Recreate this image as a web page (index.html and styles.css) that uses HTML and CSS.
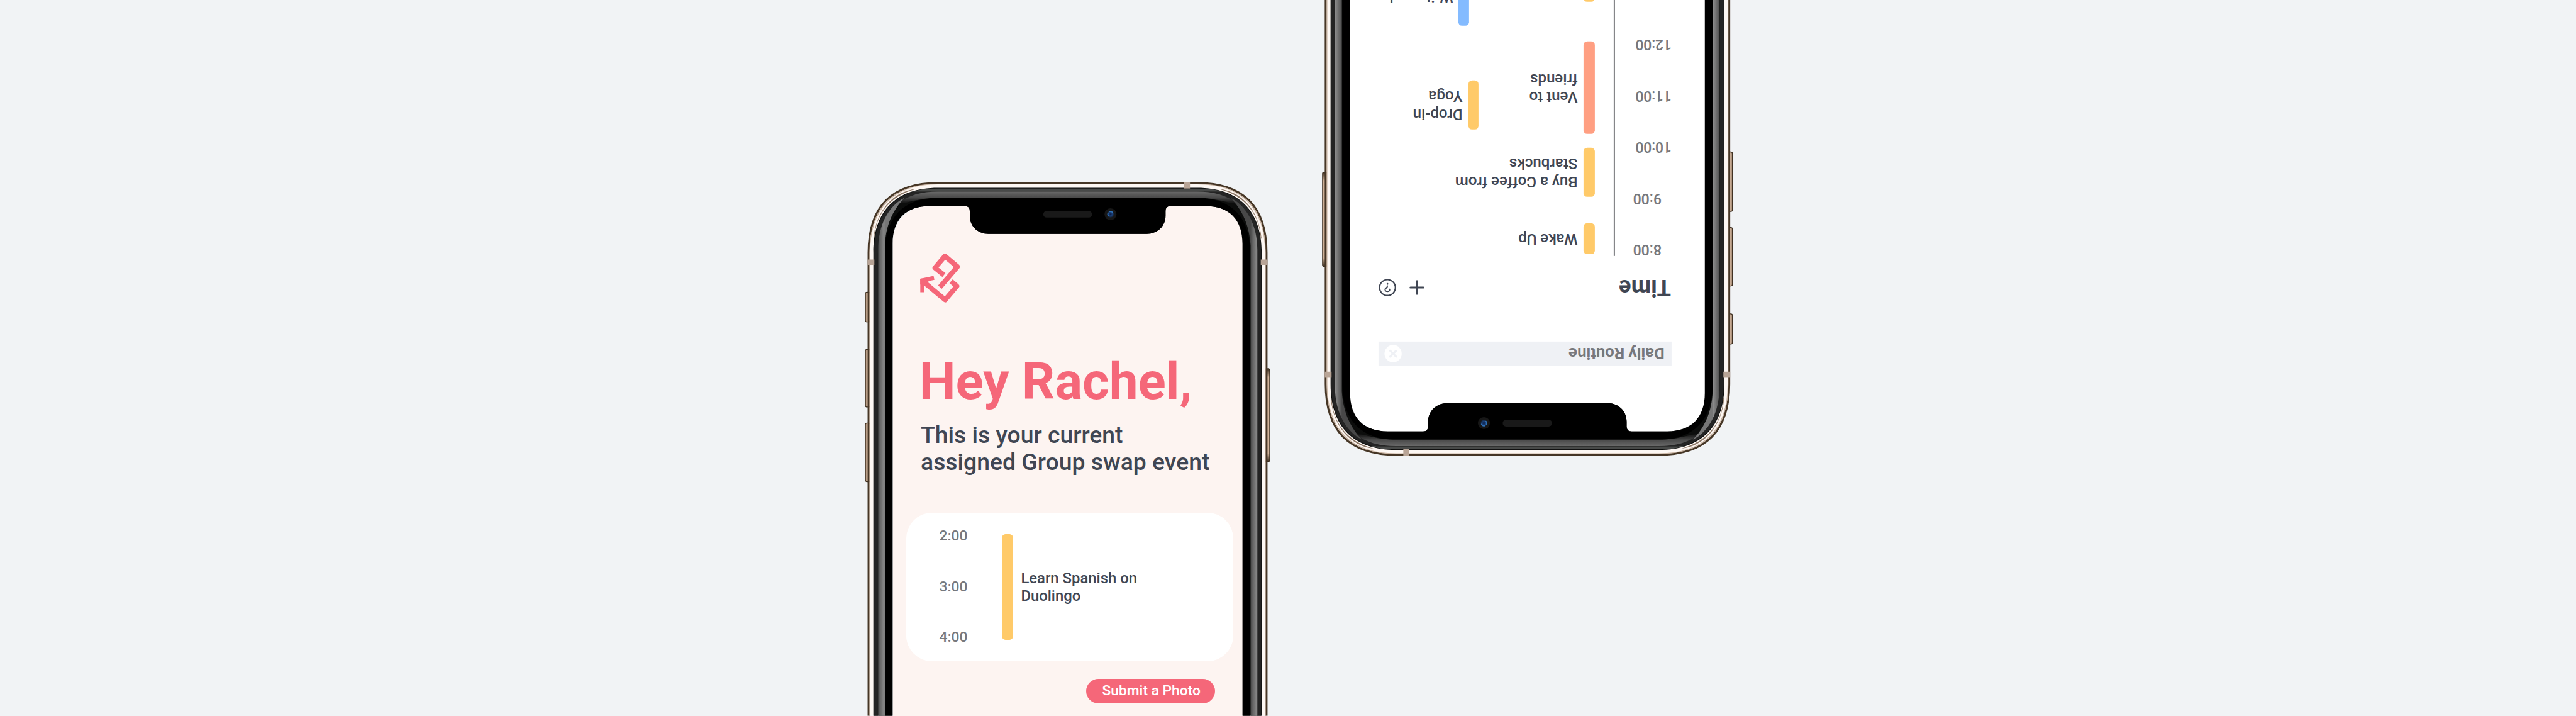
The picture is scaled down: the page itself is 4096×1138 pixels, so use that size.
FILE: index.html
```html
<!DOCTYPE html>
<html lang="en">
<head>
<meta charset="utf-8">
<title>Group swap</title>
<link rel="stylesheet" href="styles.css">
</head>
<body>
<svg class="defs" width="0" height="0" aria-hidden="true">
  <defs>
    <linearGradient id="sideShade" gradientUnits="userSpaceOnUse" x1="97" y1="0" x2="133" y2="0"><stop offset="0" stop-color="#484848"/><stop offset=".3" stop-color="#606060"/><stop offset=".9" stop-color="#8a8a8a"/><stop offset="1" stop-color="#777"/></linearGradient>
    <linearGradient id="sideShadeR" gradientUnits="userSpaceOnUse" x1="1972" y1="0" x2="2008" y2="0"><stop offset="0" stop-color="#484848"/><stop offset=".3" stop-color="#606060"/><stop offset=".9" stop-color="#8a8a8a"/><stop offset="1" stop-color="#777"/></linearGradient>
    <linearGradient id="topShade" gradientUnits="userSpaceOnUse" x1="0" y1="92" x2="0" y2="160"><stop offset="0" stop-color="#6a6a6a"/><stop offset=".48" stop-color="#484848"/><stop offset="1" stop-color="#000"/></linearGradient>
    <linearGradient id="keyL" x1="0" y1="0" x2="1" y2="0"><stop offset="0" stop-color="#8d7460"/><stop offset=".35" stop-color="#dcbfa7"/><stop offset="1" stop-color="#c9aa90"/></linearGradient>
    <linearGradient id="keyEnds" x1="0" y1="0" x2="0" y2="1"><stop offset="0" stop-color="#3a2c1e"/><stop offset=".09" stop-color="#3a2c1e" stop-opacity="0"/><stop offset=".91" stop-color="#3a2c1e" stop-opacity="0"/><stop offset="1" stop-color="#3a2c1e"/></linearGradient>
    <radialGradient id="lens"><stop offset="0" stop-color="#0b1c44"/><stop offset=".55" stop-color="#1a3f78"/><stop offset="1" stop-color="#14202f"/></radialGradient>
    <symbol id="frame" viewBox="0 0 2106 2730">
      <g fill="url(#keyL)" stroke="#3f3021" stroke-width="4">
        <rect x="35" y="599" width="24" height="150" rx="8"/>
        <rect x="35" y="887" width="24" height="290" rx="8"/>
        <rect x="35" y="1257" width="24" height="295" rx="8"/>
        <rect x="2046" y="984" width="23" height="468" rx="8"/>
      </g>
      <rect x="2050" y="984" width="19" height="468" rx="6" fill="url(#keyEnds)"/>
      <g fill="none">
        <path stroke="#463626" stroke-width="10" d="M51 2730V400C51 168 168 50 400 50H1704C1936 50 2053 168 2053 400V2730"/>
        <path stroke="#c9b3a1" stroke-width="6" d="M58 2730V400C58 174 174 57 400 57H1704C1930 57 2046 174 2046 400V2730"/>
        <path stroke="#fdf7f3" stroke-width="18" d="M68 2730V400C68 183 183 66 400 66H1704C1921 66 2036 183 2036 400V2730"/>
      </g>
      <path fill="#8d7867" d="M80 330C86 215 150 118 290 80C175 92 88 190 76 330Z"/>
      <path fill="#8d7867" d="M2024 330C2018 215 1954 118 1814 80C1929 92 2016 190 2028 330Z"/>
      <path fill="#0c0d0c" fill-rule="evenodd" d="M75 2730V400C75 190 190 74 400 74H1704C1914 74 2029 190 2029 400V2730H1936V356C1936 235 1866 166 1746 166H1570Q1545 166 1545 191V215C1545 268 1503 306 1450 306H654C601 306 560 268 560 215V191Q560 166 535 166H358C238 166 168 235 168 356V2730Z"/>
      <path fill="none" stroke="#242424" stroke-width="20" d="M88 2730V400C88 198 198 87 400 87H1704C1906 87 2016 198 2016 400V2730"/>
      <path fill="#484a49" d="M330 80H1774L1834 93H270Z"/>
      <path fill="none" stroke="#1c1c1c" stroke-width="2" d="M300 91H1804"/>
      <path fill="#000" fill-rule="evenodd" d="M133 2730V400C133 225 225 125 400 125H1704C1879 125 1971 225 1971 400V2730H1932V356C1932 235 1866 166 1746 166H1570Q1545 166 1545 191V215C1545 268 1503 306 1450 306H654C601 306 560 268 560 215V191Q560 166 535 166H358C238 166 172 235 172 356V2730Z"/>
      <path fill="url(#topShade)" d="M190 158C250 110 320 93 400 93H1704C1784 93 1854 110 1914 158C1850 150 1800 125 1704 125H400C304 125 254 150 190 158Z"/>
      <path fill="url(#sideShade)" d="M133 2730V365C137 265 172 185 232 125C150 165 99 265 99 385V2730Z"/>
      <path fill="url(#sideShadeR)" d="M1973 2730V365C1967 265 1932 185 1872 125C1954 165 2007 265 2007 385V2730Z"/>
      <g fill="#b8a496">
        <rect x="46" y="435" width="34" height="27"/>
        <rect x="2024" y="435" width="34" height="27"/>
        <rect x="1638" y="45" width="30" height="33"/>
      </g>
      <rect x="930" y="190" width="245" height="34" rx="17" fill="#191919"/>
      <circle cx="1268" cy="207" r="30" fill="#171717"/>
      <circle cx="1268" cy="207" r="17" fill="url(#lens)"/>
      <path fill="none" stroke="#2f70b5" stroke-width="5" stroke-linecap="round" d="M1256 201A13 13 0 0 0 1258 216M1264 194A14 14 0 0 1 1280 202"/>
    </symbol>
  </defs>
</svg>

<main class="stage">
  <section class="phone phone--swap">
    <div class="screen screen--swap">
      <svg class="logo" viewBox="310 405 202 247" fill="none" stroke="#f56779">
        <path stroke-width="25" stroke-linejoin="round" d="M430 513L385 477L435 418L498 471L410 574M466 544L495 569L436 638L325 545"/>
        <path stroke-width="20" d="M380 527L321 540V600"/>
        <path stroke-width="2" fill="#f56779" d="M311 533L333 530L352 547L334 562L311 560Z"/>
      </svg>
      <h1 class="greeting">Hey Rachel,</h1>
      <p class="lead">This is your current<br>assigned Group swap event</p>
      <article class="card">
        <div class="card__hours"><span>2:00</span><span>3:00</span><span>4:00</span></div>
        <div class="card__bar"></div>
        <p class="card__title">Learn Spanish on<br>Duolingo</p>
      </article>
      <button class="submit" type="button">Submit a Photo</button>
    </div>
    <svg class="phone__frame"><use href="#frame"/></svg>
  </section>

  <section class="phone phone--routine">
    <div class="screen screen--routine">
      <div class="search">
        <span>Daily Routine</span>
        <svg class="search__clear" viewBox="0 0 29 29"><circle cx="14.5" cy="14.5" r="14.5" fill="#fff"/><path d="M9.5 9.5l10 10M19.5 9.5l-10 10" stroke="#eff1f5" stroke-width="3.4" stroke-linecap="round"/></svg>
      </div>
      <header class="bar">
        <h2>Time</h2>
        <div class="bar__actions">
          <svg class="icon-add" viewBox="0 0 25 25" stroke="#404653" stroke-width="3.2" stroke-linecap="round"><path d="M12.5 1.6v21.8M1.6 12.5h21.8"/></svg>
          <svg class="icon-help" viewBox="0 0 29 29" fill="none" stroke="#404653"><circle cx="14.5" cy="14.5" r="13.3" stroke-width="2.3"/><path d="M10.7 11.6C10.3 6.8 18.7 6.8 18.5 11.3C18.4 13.8 14.5 13.7 14.5 17.2" stroke-width="2.1" stroke-linecap="round"/><circle cx="14.5" cy="20.7" r="1.5" fill="#404653" stroke="none"/></svg>
        </div>
      </header>
      <div class="timeline">
        <ol class="hours">
          <li>8:00</li><li>9:00</li><li class="wide">10:00</li><li class="wide">11:00</li><li class="wide">12:00</li>
        </ol>
        <div class="rule"></div>
        <div class="lane lane--mine">
          <div class="event event--wake"><i></i><p>Wake Up</p></div>
          <div class="event event--coffee"><i></i><p>Buy a Coffee from<br>Starbucks</p></div>
          <div class="event event--vent"><i></i><p>Vent to<br>friends</p></div>
          <div class="event event--next"><i></i></div>
        </div>
        <div class="lane lane--side">
          <div class="event event--yoga"><i></i><p>Drop-in<br>Yoga</p></div>
          <div class="event event--write"><i></i><p>Write and</p></div>
        </div>
      </div>
    </div>
    <svg class="phone__frame"><use href="#frame"/></svg>
  </section>
</main>
</body>
</html>
```
FILE: styles.css
```css
* { box-sizing: border-box; margin: 0; padding: 0; }
html, body { height: 100%; overflow: hidden; background: #f1f3f5; }
body { font-family: Roboto, "Liberation Sans", sans-serif; color: #404653; }
.defs { position: absolute; }

.stage {
  position: relative;
  width: 4320px;
  height: 1200px;
  overflow: hidden;
  zoom: 0.948148;
}

/* devices */
.phone { position: absolute; }
.phone--swap { left: 1440px; top: 290px; width: 702px; height: 910px; }
.phone--routine { left: 2205px; top: -143.8px; width: 711.8px; height: 922.7px; transform: rotate(180deg); }
.phone__frame { position: absolute; inset: 0; width: 100%; height: 100%; }
.screen { position: absolute; bottom: 0; overflow: hidden; display: flex; flex-direction: column; }

/* swap screen */
.screen--swap {
  left: 57.3px; top: 55.3px; width: 588.5px;
  background: #fdf4f1;
  padding: 79.7px 16.8px 0 22px;
  border-radius: 60px 60px 0 0;
}
.logo { width: 67.3px; height: 82.3px; margin-left: 24px; flex: none; }
.greeting {
  margin: 82px 0 0 22.3px;
  font-size: 86.4px; font-weight: 700; line-height: 100px;
  color: #f56779; white-space: nowrap;
}
.lead {
  margin: 17.3px 0 0 24.8px;
  font-size: 39.4px; font-weight: 500; line-height: 45.6px;
  white-space: nowrap;
}
.card {
  display: flex; align-items: center;
  width: 548.7px; height: 248.3px; margin-top: 62.2px; flex: none;
  padding-left: 56px;
  background: #fff; border-radius: 43px;
}
.card__hours {
  display: flex; flex-direction: column; width: 104.4px;
  font-size: 24px; font-weight: 500; line-height: 85px; color: #77787c;
}
.card__bar { width: 19px; height: 178px; border-radius: 6px; background: #ffca69; }
.card__title { margin-left: 13.5px; font-size: 25.2px; font-weight: 500; line-height: 30px; }
.submit {
  align-self: flex-end; flex: none;
  width: 216.3px; height: 41px; margin: 30px 31px 0 0; padding-left: 2px;
  border: 0; border-radius: 21px; background: #f56779; color: #fff;
  font: 500 24px/41px Roboto, "Liberation Sans", sans-serif;
}

/* routine screen, upside down */
.screen--routine {
  left: 56.5px; top: 56.2px; width: 597.7px;
  background: #fff;
  padding: 109.7px 49px 0 57.3px;
  border-radius: 60px 60px 0 0;
}
.search {
  display: flex; align-items: center; justify-content: space-between; flex: none;
  height: 41px; padding: 0 9.6px 0 12px;
  background: #eff1f5; color: #77787c;
  font-size: 27.1px; font-weight: 700;
}
.search__clear { width: 29px; height: 29px; }
.bar { display: flex; align-items: center; justify-content: space-between; height: 44px; margin-top: 68.5px; flex: none; }
.bar h2 { font-size: 38.2px; font-weight: 700; line-height: 44px; margin-left: 1px; }
.bar__actions { display: flex; align-items: center; gap: 22.3px; }
.icon-add { width: 25px; height: 25px; }
.icon-help { width: 29px; height: 29px; }
.timeline { display: flex; margin-top: 30.8px; width: 520px; }
.hours { width: 95.3px; flex: none; margin-top: -32px; list-style: none; font-size: 24.3px; font-weight: 500; line-height: 86px; color: #77787c; }
.hours li { padding-left: 17px; }
.hours li.wide { padding-left: 0; letter-spacing: -.2px; }
.rule { width: 1.5px; height: 600px; background: #77787c; flex: none; }
.lane { flex: none; font-size: 25.4px; font-weight: 500; line-height: 30.3px; white-space: nowrap; }
.lane--mine { width: 194.7px; margin-left: 32.2px; }
.event { display: flex; align-items: center; }
.event i { align-self: stretch; width: 19.3px; border-radius: 6px; background: #ffca69; flex: none; }
.event p { margin-left: 9.5px; }
.event--wake { height: 51px; margin-top: 3.7px; }
.event--coffee { height: 83px; margin-top: 44px; }
.event--vent { height: 155px; margin-top: 23px; }
.event--vent i { background: #ff9f82; }
.event--next { height: 80px; margin-top: 66px; }
.lane--side .event i { width: 17.5px; }
.event--yoga { height: 83px; margin-top: 211.7px; }
.event--write { height: 99px; margin: 91px 0 0 16px; font-size: 25px; }
.event--write i { background: #84bbff; }
```
